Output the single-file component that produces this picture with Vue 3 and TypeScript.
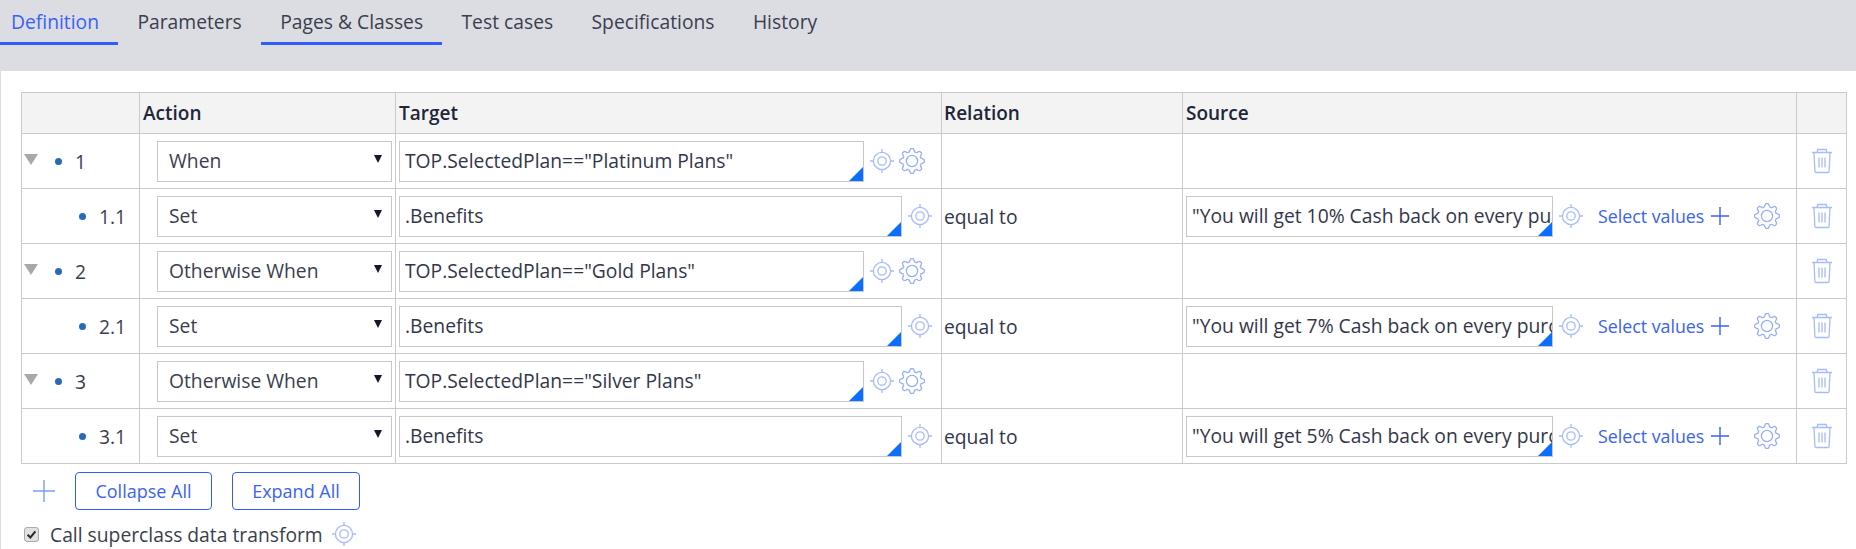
<script setup lang="ts">
interface Row {
  id: string
  parent: boolean
  action: string
  target: string
  source?: string
}

const tabs = ['Definition', 'Parameters', 'Pages & Classes', 'Test cases', 'Specifications', 'History']
const rows: Row[] = [
  { id: '1', parent: true, action: 'When', target: 'TOP.SelectedPlan=="Platinum Plans"' },
  { id: '1.1', parent: false, action: 'Set', target: '.Benefits', source: '"You will get 10% Cash back on every purchase"' },
  { id: '2', parent: true, action: 'Otherwise When', target: 'TOP.SelectedPlan=="Gold Plans"' },
  { id: '2.1', parent: false, action: 'Set', target: '.Benefits', source: '"You will get 7% Cash back on every purchase"' },
  { id: '3', parent: true, action: 'Otherwise When', target: 'TOP.SelectedPlan=="Silver Plans"' },
  { id: '3.1', parent: false, action: 'Set', target: '.Benefits', source: '"You will get 5% Cash back on every purchase"' },
]

function gearPath(): string {
  const pts: string[] = []
  const n = 144
  for (let i = 0; i < n; i++) {
    const t = (i / n) * 2 * Math.PI - Math.PI / 2
    const wave = Math.max(-1, Math.min(1, 1.5 * Math.cos(8 * t + 4 * Math.PI)))
    const r = 10.9 + 1.5 * wave
    const x = (13 + r * Math.cos(t)).toFixed(2)
    const y = (13 + r * Math.sin(t)).toFixed(2)
    pts.push(`${i === 0 ? 'M' : 'L'}${x} ${y}`)
  }
  return pts.join(' ') + ' Z'
}
const gear = gearPath()
</script>

<template>
  <div class="page">
    <nav class="tabs">
      <a
        v-for="(t, i) in tabs"
        :key="t"
        class="tab"
        :class="{ active: i === 0, marked: i === 2 }"
      >{{ t }}</a>
    </nav>
    <section class="panel">
      <table class="grid">
        <colgroup>
          <col class="c1" /><col class="c2" /><col class="c3" /><col class="c4" /><col class="c5" /><col class="c6" />
        </colgroup>
        <thead>
          <tr>
            <th></th>
            <th>Action</th>
            <th>Target</th>
            <th class="th-rel">Relation</th>
            <th>Source</th>
            <th></th>
          </tr>
        </thead>
        <tbody>
          <tr v-for="r in rows" :key="r.id">
            <td>
              <div class="idcell" :class="{ child: !r.parent }">
                <span v-if="r.parent" class="caret"></span>
                <span class="dot"></span>
                <span class="num">{{ r.id }}</span>
              </div>
            </td>
            <td>
              <div class="select">
                <span>{{ r.action }}</span>
                <span class="arrow"></span>
              </div>
            </td>
            <td>
              <div class="flexcell">
                <div class="field" :class="r.parent ? 'target-short' : 'target-long'">
                  <span class="field-text">{{ r.target }}</span>
                  <span class="corner"></span>
                </div>
                <svg class="ic target" viewBox="0 0 26 26">
                  <circle cx="13" cy="13" r="8.6" />
                  <circle cx="13" cy="13" r="4.2" />
                  <path d="M13 1v3.4M13 21.6V25M1 13h3.4M21.6 13H25" />
                </svg>
                <svg v-if="r.parent" class="ic gear" viewBox="0 0 26 26">
                  <path :d="gear" />
                  <circle cx="13" cy="13" r="5.6" />
                </svg>
              </div>
            </td>
            <td><div v-if="r.source" class="rel">equal to</div></td>
            <td>
              <div v-if="r.source" class="flexcell source">
                <div class="field source-field">
                  <span class="field-text">{{ r.source }}</span>
                  <span class="corner"></span>
                </div>
                <svg class="ic target" viewBox="0 0 26 26">
                  <circle cx="13" cy="13" r="8.6" />
                  <circle cx="13" cy="13" r="4.2" />
                  <path d="M13 1v3.4M13 21.6V25M1 13h3.4M21.6 13H25" />
                </svg>
                <a class="select-values">Select values</a>
                <svg class="plus" viewBox="0 0 18 18"><path d="M9 0v18M0 9h18" /></svg>
                <svg class="ic gear gear-source" viewBox="0 0 26 26">
                  <path :d="gear" />
                  <circle cx="13" cy="13" r="5.6" />
                </svg>
              </div>
            </td>
            <td>
              <div class="trash-cell">
                <svg class="trash" viewBox="0 0 22 26">
                  <path d="M1 4.5h20M6 4.5l.8-3h8.4l.8 3M3 4.5l.9 19a1.2 1.2 0 0 0 1.2 1h11.8a1.2 1.2 0 0 0 1.2-1l.9-19M8 9.5v10M11 9.5v10M14 9.5v10" />
                </svg>
              </div>
            </td>
          </tr>
        </tbody>
      </table>

      <div class="actions">
        <svg class="add" viewBox="0 0 22 22"><path d="M11 0v22M0 11h22" /></svg>
        <button class="btn collapse" type="button">Collapse All</button>
        <button class="btn expand" type="button">Expand All</button>
      </div>

      <div class="check-row">
        <span class="checkbox">
          <svg viewBox="0 0 14 14"><path d="M2.8 7.2l3 3 5.4-6.6" /></svg>
        </span>
        <span class="check-label">Call superclass data transform</span>
        <svg class="ic target check-target" viewBox="0 0 26 26">
          <circle cx="13" cy="13" r="8.6" />
          <circle cx="13" cy="13" r="4.2" />
          <path d="M13 1v3.4M13 21.6V25M1 13h3.4M21.6 13H25" />
        </svg>
      </div>
    </section>
  </div>
</template>

<style>
html, body { margin: 0; background: #dcdde2; }
</style>

<style scoped>
.page {
  width: 1856px;
  height: 549px;
  overflow: hidden;
  background: #dcdde2;
  font-family: "Open Sans", "Liberation Sans", sans-serif;
  font-size: 19.3px;
  color: #2f3142;
  display: flex;
  flex-direction: column;
}
.tabs {
  height: 71px;
  display: flex;
  align-items: flex-start;
  flex: none;
}
.tab {
  height: 45px;
  box-sizing: border-box;
  padding: 8px 19.2px 0;
  line-height: 27px;
  color: #3b3e4e;
}
.tab:first-child { padding-left: 11px; }
.tab.active { color: #3a62f5; border-bottom: 3px solid #2f5bff; }
.tab.marked { border-bottom: 3px solid #2f5bff; }
.panel {
  flex: 1;
  margin-left: 1px;
  background: #fff;
  padding: 21px 10px 0 20px;
}
.grid {
  width: 1825px;
  table-layout: fixed;
  border-collapse: collapse;
}
.c1 { width: 118px; }
.c2 { width: 256px; }
.c3 { width: 546px; }
.c4 { width: 241px; }
.c5 { width: 614px; }
.c6 { width: 50px; }
th, td {
  border: 1px solid #cacaca;
  padding: 0;
  height: 54px;
  box-sizing: content-box;
}
th {
  height: 40px;
  background: #f3f3f3;
  text-align: left;
  font-weight: 600;
  font-size: 19px;
  line-height: 24px;
  padding-left: 3px;
  color: #22253a;
  vertical-align: middle;
}
.th-rel { padding-left: 2px; }
.idcell {
  display: flex;
  align-items: center;
  height: 54px;
  position: relative;
  padding-left: 33px;
}
.idcell.child { padding-left: 57px; }
.caret {
  position: absolute;
  left: 2px;
  top: 20px;
  width: 0;
  height: 0;
  border-left: 7px solid transparent;
  border-right: 7px solid transparent;
  border-top: 11px solid #a8a8a8;
}
.dot {
  width: 7px;
  height: 7px;
  border-radius: 50%;
  background: #2a68b8;
  margin-right: 13px;
}
.num { color: #3b3e4e; }
.select {
  margin: 0 0 0 17px;
  width: 235px;
  height: 41px;
  box-sizing: border-box;
  border: 1px solid #c8c8c8;
  display: flex;
  align-items: center;
  justify-content: space-between;
  padding: 0 9px 1px 11px;
  color: #3b3e4e;
}
.arrow {
  width: 0;
  height: 0;
  border-left: 4px solid transparent;
  border-right: 4px solid transparent;
  border-top: 8px solid #14162c;
  margin-bottom: 4px;
}
.flexcell {
  display: flex;
  align-items: center;
  padding-left: 3px;
}
.field {
  position: relative;
  height: 41px;
  box-sizing: border-box;
  border: 1px solid #c8c8c8;
  display: flex;
  align-items: center;
  padding: 0 0 1px 5px;
  flex: none;
}
.field-text {
  color: #33364a;
  flex: 1;
  min-width: 0;
  overflow: hidden;
  white-space: nowrap;
}
.target-short { width: 465px; }
.target-long { width: 503px; }
.source { padding-left: 3px; }
.source-field { width: 367px; }
.corner {
  position: absolute;
  right: 0;
  bottom: 0;
  width: 0;
  height: 0;
  border-left: 14px solid transparent;
  border-bottom: 14px solid #0a6eff;
}
.ic {
  width: 26px;
  height: 26px;
  flex: none;
  fill: none;
  stroke: #a9bbfa;
  stroke-width: 1.3;
}
.target { margin-left: 5px; }
.gear { margin-left: 4px; stroke: #98adf9; }
.select-values {
  color: #3a62f5;
  margin-left: 14px;
  white-space: nowrap;
  font-size: 17.8px;
}
.plus {
  width: 18px;
  height: 18px;
  margin-left: 7px;
  flex: none;
  fill: none;
  stroke: #3a62f5;
  stroke-width: 1.4;
}
.gear-source { margin-left: 25px; }
.rel { padding-left: 2px; color: #33364a; }
.trash-cell { display: flex; justify-content: center; }
.trash {
  width: 22px;
  height: 26px;
  fill: none;
  stroke: #a9bbfa;
  stroke-width: 1.3;
}
.actions {
  display: flex;
  align-items: center;
  margin-top: 8px;
  height: 38px;
}
.add {
  width: 22px;
  height: 22px;
  margin-left: 12px;
  flex: none;
  fill: none;
  stroke: #7f9bf8;
  stroke-width: 1.4;
}
.btn {
  height: 38px;
  box-sizing: border-box;
  background: #fff;
  border: 1px solid #2f5bff;
  border-radius: 4px;
  color: #3a62f5;
  font-family: inherit;
  font-size: 18px;
  padding: 0;
}
.collapse { width: 137px; margin-left: 20px; }
.expand { width: 128px; margin-left: 20px; }
.check-row {
  display: flex;
  align-items: center;
  margin-top: 9px;
  height: 30px;
  padding-left: 3px;
}
.checkbox {
  width: 15px;
  height: 15px;
  box-sizing: border-box;
  border: 1px solid #aaaaaa;
  border-radius: 3px;
  background: #e2e2e2;
  display: flex;
  flex: none;
}
.checkbox svg {
  width: 13px;
  height: 13px;
  fill: none;
  stroke: #2b2b2b;
  stroke-width: 2.2;
}
.check-label {
  margin-left: 11px;
  color: #3b3e4e;
}
.check-target { margin-left: 8px; }
</style>
